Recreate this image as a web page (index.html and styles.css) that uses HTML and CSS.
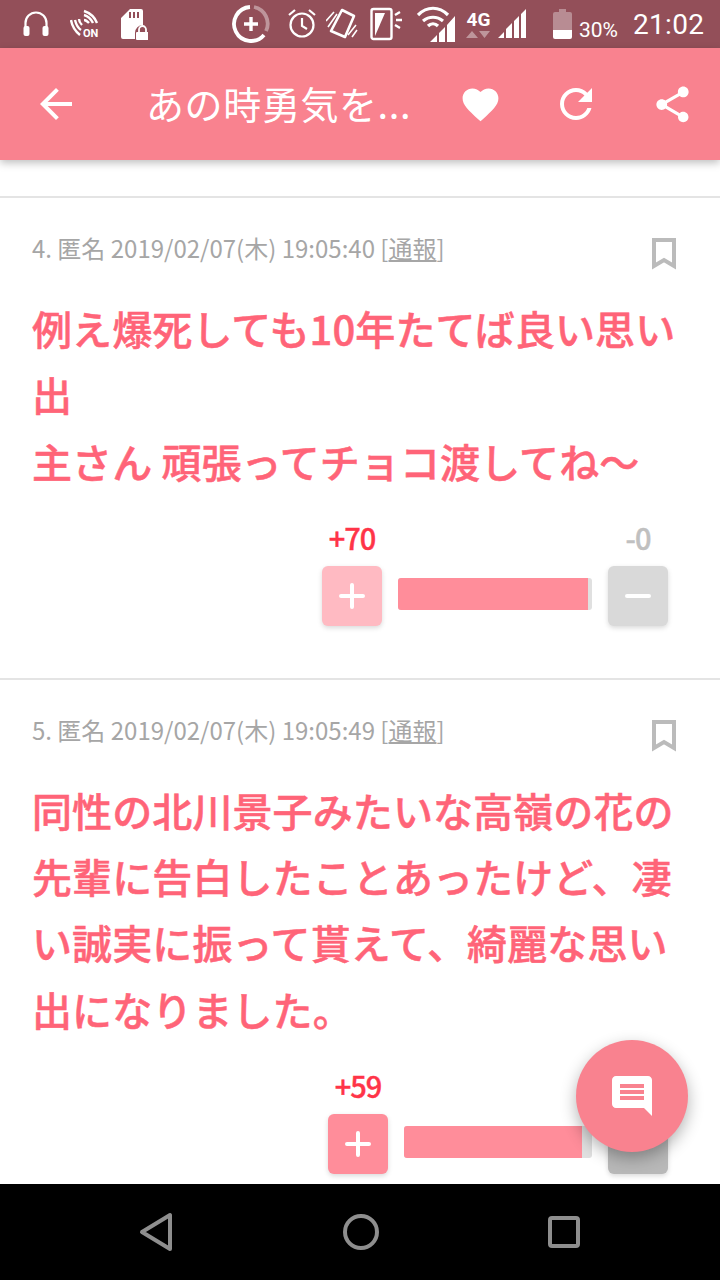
FILE: index.html
```html
<!DOCTYPE html>
<html lang="ja">
<head>
<meta charset="UTF-8">
<meta name="viewport" content="width=device-width, initial-scale=1.0">
<title>あの時勇気を</title>
<link rel="stylesheet" href="styles.css">
</head>
<body>

<div class="screen">

  <!-- status bar: each svg is 48px tall so y values are screen pixels -->
  <div class="status-bar">
    <svg class="st-headphones" width="26" height="48" viewBox="0 0 26 48">
      <path d="M2.500 27v-4a10.500 10.500 0 0 1 21 0v4" fill="none" stroke="#fff" stroke-width="2.200"/>
      <rect x="0.500" y="26" width="6" height="10" rx="2" fill="#fff"/>
      <rect x="19.500" y="26" width="6" height="10" rx="2" fill="#fff"/>
    </svg>
    <svg class="st-nfc" width="29" height="48" viewBox="0 0 29 48">
      <path d="M1 20c1 6 4 11 9 15M5 20c1 4 3 8 6 10M9 19c0 3 2 5 3 6M14 11c6 2 11 7 13 12M14 15c4 1 7 4 9 8M14 20c2 0 4 2 5 3" fill="none" stroke="#fff" stroke-width="2.400"/>
      <text class="st-on" x="13" y="37">ON</text>
    </svg>
    <svg class="st-sd" width="28" height="48" viewBox="0 0 28 48">
      <path d="M10 9h11a2 2 0 0 1 2 2v14a8 8 0 0 0-8 8v6H3a2 2 0 0 1-2-2V18z" fill="#fff"/>
      <path d="M9 12h2v6H9zM13 12h2v6h-2zM17 12h2v6h-2z" fill="#934f59"/>
      <path d="M19 32v-2.500a3.500 3.500 0 0 1 7 0v2.500" fill="none" stroke="#fff" stroke-width="1.800"/>
      <rect x="16" y="32" width="13" height="8" rx="1" fill="#fff"/>
    </svg>
    <svg class="st-boost" width="38" height="48" viewBox="0 0 38 48">
      <path d="M22 7a17 17 0 0 1 12 24" fill="none" stroke="#fff" stroke-opacity=".4" stroke-width="3.800"/>
      <path d="M32 35A17 17 0 1 1 18 7" fill="none" stroke="#fff" stroke-width="3.800"/>
      <path d="M12 24h14M19 17v14" stroke="#fff" stroke-width="3.400"/>
    </svg>
    <svg class="st-alarm" width="28" height="48" viewBox="0 0 28 48">
      <circle cx="14" cy="25" r="11.500" fill="none" stroke="#fff" stroke-width="2.200"/>
      <path d="M14 18v8l5 3M1 15l6-5M27 15l-6-5" fill="none" stroke="#fff" stroke-width="2.200"/>
    </svg>
    <svg class="st-vibrate" width="32" height="48" viewBox="0 0 32 48">
      <path d="M16 10l12 6-9 21-14-6z" fill="none" stroke="#fff" stroke-width="2.600" stroke-linejoin="round"/>
      <path d="M0 21l8-9M2 27l9-13M22 35l8-10M26 37l5-7" fill="none" stroke="#fff" stroke-width="1.600"/>
    </svg>
    <svg class="st-flash" width="33" height="48" viewBox="0 0 33 48">
      <rect x="1.500" y="9" width="20" height="30" rx="2" fill="none" stroke="#fff" stroke-width="2.400"/>
      <path d="M5 36V13h10z" fill="#fff"/>
      <path d="M25 15l5-3M26 20h6M25 25l5 3" fill="none" stroke="#fff" stroke-width="2.400"/>
    </svg>
    <svg class="st-wifi" width="38" height="48" viewBox="0 0 38 48">
      <path d="M1 15c9-9 21-9 30 0M6 21c6-5 14-5 20 0M11 26c3-3 7-3 10 0" fill="none" stroke="#fff" stroke-width="3.200"/>
      <path d="M13 42l7-7v7zM22 42V33l6-6v15zM30 42V25l8-9v26z" fill="#fff"/>
    </svg>
    <div class="st-net">
      <span class="st-net-label">4G</span>
      <svg width="25" height="8" viewBox="0 0 25 8">
        <path d="M0 7l6-7 6 7zM13 0h11l-5.500 7z" fill="#fff" fill-opacity=".4"/>
      </svg>
    </div>
    <svg class="st-signal" width="29" height="48" viewBox="0 0 29 48">
      <path d="M0 38l6-6v6zM8 38V29l6-6v15zM16 38V21l5-5v22zM23 38V14l5-5v29z" fill="#fff"/>
    </svg>
    <svg class="st-battery" width="19" height="48" viewBox="0 0 19 48">
      <path d="M6 9h7v3h4a2 2 0 0 1 2 2v16H0V14a2 2 0 0 1 2-2h4z" fill="#fff" fill-opacity=".35"/>
      <path d="M0 30h19v7a2 2 0 0 1-2 2H2a2 2 0 0 1-2-2z" fill="#fff"/>
    </svg>
    <span class="st-percent">30%</span>
    <span class="st-time">21:02</span>
  </div>

  <div class="app-bar">
    <div class="bar-btn back-btn">
      <svg width="48" height="48" viewBox="0 0 24 24"><path d="M20 11H7.830l5.590-5.590L12 4l-8 8 8 8 1.410-1.410L7.830 13H20v-2z" fill="#fff"/></svg>
    </div>
    <div class="bar-title">あの時勇気を...</div>
    <div class="bar-btn">
      <svg width="43" height="43" viewBox="0 0 24 24"><path d="M12 21.350l-1.450-1.320C5.400 15.360 2 12.280 2 8.500 2 5.420 4.420 3 7.500 3c1.740 0 3.410.81 4.500 2.090C13.090 3.810 14.760 3 16.500 3 19.580 3 22 5.420 22 8.500c0 3.780-3.400 6.860-8.550 11.540L12 21.350z" fill="#fff"/></svg>
    </div>
    <div class="bar-btn">
      <svg width="48" height="48" viewBox="0 0 24 24"><path d="M17.650 6.350C16.200 4.900 14.210 4 12 4c-4.420 0-7.990 3.580-7.990 8s3.570 8 7.990 8c3.730 0 6.840-2.550 7.730-6h-2.080c-.82 2.330-3.040 4-5.650 4-3.310 0-6-2.690-6-6s2.690-6 6-6c1.660 0 3.140.69 4.220 1.780L13 11h7V4l-2.350 2.350z" fill="#fff"/></svg>
    </div>
    <div class="bar-btn">
      <svg width="43" height="43" viewBox="0 0 24 24"><path d="M18 16.080c-.76 0-1.440.3-1.960.77L8.910 12.700c.05-.23.09-.46.09-.7s-.04-.47-.09-.7l7.050-4.110c.54.5 1.250.81 2.040.81 1.660 0 3-1.340 3-3s-1.340-3-3-3-3 1.340-3 3c0 .24.04.47.09.7L8.040 9.810C7.500 9.310 6.790 9 6 9c-1.660 0-3 1.340-3 3s1.340 3 3 3c.79 0 1.500-.31 2.040-.81l7.120 4.160c-.05.21-.08.43-.08.65 0 1.610 1.310 2.920 2.920 2.920 1.610 0 2.920-1.310 2.920-2.920s-1.310-2.920-2.920-2.920z" fill="#fff"/></svg>
    </div>
  </div>

  <div class="comments">

    <div class="comment">
      <div class="comment-head">
        <div class="comment-meta">4. 匿名 2019/02/07(木) 19:05:40 [<u>通報</u>]</div>
        <svg class="bookmark" width="24" height="32" viewBox="0 0 24 32"><path d="M2 2h20v26l-10-6-10 6z" fill="none" stroke="#bbb" stroke-width="4"/></svg>
      </div>
      <div class="comment-body">例え爆死しても10年たてば良い思い<br>出<br>主さん 頑張ってチョコ渡してね～</div>
      <div class="votes">
        <div class="vote-col">
          <span class="count count-plus">+70</span>
          <div class="vote-btn plus faded">
            <svg width="26" height="26" viewBox="0 0 26 26"><path d="M2 13h22M13 2v22" stroke="#fff" stroke-width="4" stroke-linecap="round"/></svg>
          </div>
        </div>
        <div class="vote-bar" style="width:194px"><div class="vote-fill" style="width:190px"></div></div>
        <div class="vote-col">
          <span class="count count-minus">-0</span>
          <div class="vote-btn minus">
            <svg width="26" height="26" viewBox="0 0 26 26"><path d="M2 13h22" stroke="#fff" stroke-width="4" stroke-linecap="round"/></svg>
          </div>
        </div>
      </div>
    </div>

    <div class="comment">
      <div class="comment-head">
        <div class="comment-meta">5. 匿名 2019/02/07(木) 19:05:49 [<u>通報</u>]</div>
        <svg class="bookmark" width="24" height="32" viewBox="0 0 24 32"><path d="M2 2h20v26l-10-6-10 6z" fill="none" stroke="#bbb" stroke-width="4"/></svg>
      </div>
      <div class="comment-body">同性の北川景子みたいな高嶺の花の<br>先輩に告白したことあったけど、凄<br>い誠実に振って貰えて、綺麗な思い<br>出になりました。</div>
      <div class="votes">
        <div class="vote-col">
          <span class="count count-plus">+59</span>
          <div class="vote-btn plus">
            <svg width="26" height="26" viewBox="0 0 26 26"><path d="M2 13h22M13 2v22" stroke="#fff" stroke-width="4" stroke-linecap="round"/></svg>
          </div>
        </div>
        <div class="vote-bar" style="width:188px"><div class="vote-fill" style="width:178px"></div></div>
        <div class="vote-col">
          <span class="count count-minus">-0</span>
          <div class="vote-btn minus shaded"></div>
        </div>
      </div>
    </div>

    <div class="fab">
      <svg width="48" height="48" viewBox="0 0 24 24"><path d="M22 4c0-1.100-.9-2-2-2H4c-1.100 0-2 .9-2 2v12c0 1.100.9 2 2 2h14l4 4V4zM18 14H6v-2h12v2zm0-3H6V9h12v2zm0-3H6V6h12v2z" fill="#fff"/></svg>
    </div>
  </div>

  <div class="nav-bar">
    <svg width="36" height="40" viewBox="0 0 36 40"><path d="M32 3v34L4 20z" fill="none" stroke="#8e8e8e" stroke-width="4" stroke-linejoin="round"/></svg>
    <svg width="36" height="36" viewBox="0 0 36 36"><circle cx="18" cy="18" r="16" fill="none" stroke="#8e8e8e" stroke-width="4"/></svg>
    <svg width="32" height="32" viewBox="0 0 32 32"><rect x="2" y="2" width="28" height="28" rx="2" fill="none" stroke="#8e8e8e" stroke-width="4"/></svg>
  </div>

</div>

</body>
</html>
```

FILE: styles.css
```css
/* page */
body {
  margin: 0;
  font-family: "Noto Sans CJK JP", "Noto Sans", sans-serif;
  background: #fff;
}

.screen {
  width: 720px;
  height: 1280px;
  display: flex;
  flex-direction: column;
  overflow: hidden;
}

/* status bar */
.status-bar {
  height: 48px;
  flex: none;
  background: #934f59;
  color: #fff;
  display: flex;
  align-items: center;
  padding-left: 23px;
}

.st-on {
  font-family: "Roboto", sans-serif;
  font-size: 11px;
  font-weight: 700;
  fill: #fff;
}

.st-nfc { margin-left: 21px; }
.st-sd { margin-left: 21px; }
.st-boost { margin-left: 84px; }
.st-alarm { margin-left: 18px; }
.st-vibrate { margin-left: 10px; }
.st-flash { margin-left: 12px; }
.st-wifi { margin-left: 14px; }
.st-signal { margin-left: 7px; }
.st-battery { margin-left: 26px; }

.st-net {
  margin-left: 11px;
  width: 25px;
  display: flex;
  flex-direction: column;
  align-items: center;
  line-height: 1;
}

.st-net-label {
  font-family: "Roboto", sans-serif;
  font-size: 19px;
  font-weight: 700;
  height: 21px;
}

.st-percent {
  font-family: "Roboto", sans-serif;
  font-size: 21px;
  margin-left: 7px;
  margin-top: 11px;
  width: 54px;
}

.st-time {
  font-family: "Roboto", sans-serif;
  font-size: 28px;
  letter-spacing: .3px;
}

/* app bar */
.app-bar {
  height: 112px;
  flex: none;
  background: #f9828f;
  display: flex;
  align-items: center;
  padding-right: 24px;
  box-shadow: 0 3px 8px rgba(0, 0, 0, .25);
  position: relative;
}

.bar-btn {
  width: 48px;
  height: 48px;
  margin-left: 48px;
  flex: none;
  display: flex;
  align-items: center;
  justify-content: center;
}

.back-btn {
  margin-left: 32px;
}

.bar-title {
  flex: 1;
  min-width: 0;
  margin-left: 66px;
  margin-right: -10px;
  padding-bottom: 3px;
  color: #fff;
  font-size: 38px;
  letter-spacing: .6px;
  white-space: nowrap;
}

/* comment list */
.comments {
  flex: 1;
  position: relative;
  padding-top: 36px;
  overflow: hidden;
}

.comment {
  border-top: 2px solid #e4e4e4;
  padding: 0 32px 52px;
}

.comment-head {
  height: 97px;
  display: flex;
  justify-content: space-between;
  align-items: flex-start;
  padding-right: 12px;
}

.comment-meta {
  margin-top: 33px;
  font-size: 24px;
  line-height: 34px;
  color: #a6a6a6;
}

.bookmark {
  margin-top: 40px;
}

.comment-body {
  font-size: 40px;
  font-weight: 500;
  -webkit-text-stroke: .5px #ff6478;
  letter-spacing: .1px;
  line-height: 66.25px;
  color: #ff6478;
  white-space: nowrap;
}

.votes {
  display: flex;
  justify-content: flex-end;
  align-items: flex-end;
  gap: 16px;
  margin-top: 23px;
  padding-right: 20px;
}

.vote-col {
  width: 60px;
  display: flex;
  flex-direction: column;
  align-items: center;
}

.count {
  font-size: 29px;
  font-weight: 500;
  -webkit-text-stroke: .4px currentColor;
  line-height: 40px;
  letter-spacing: -1px;
  margin-bottom: 9px;
}

.count-plus { color: #ff3448; }
.count-minus { color: #c0c0c0; }

.vote-btn {
  width: 60px;
  height: 60px;
  border-radius: 6px;
  display: flex;
  align-items: center;
  justify-content: center;
  box-shadow: 0 2px 5px rgba(0, 0, 0, .15);
}

.plus { background: #ff8d9a; }
.plus.faded { background: #ffbac2; }
.minus { background: #d9d9d9; }
.minus.shaded { background: #b8b8b8; }

.vote-bar {
  height: 32px;
  margin-bottom: 16px;
  border-radius: 3px;
  background: #e0e0e0;
  overflow: hidden;
}

.vote-fill {
  height: 100%;
  background: #ff8d9a;
}

/* floating button */
.fab {
  position: absolute;
  left: 576px;
  top: 880px;
  width: 112px;
  height: 112px;
  border-radius: 50%;
  background: #f9828f;
  display: flex;
  align-items: center;
  justify-content: center;
  box-shadow: 0 6px 16px rgba(0, 0, 0, .3);
}

/* nav bar */
.nav-bar {
  height: 96px;
  flex: none;
  background: #000;
  display: flex;
  align-items: center;
  padding: 0 140px 0 138px;
  justify-content: space-between;
}
```
